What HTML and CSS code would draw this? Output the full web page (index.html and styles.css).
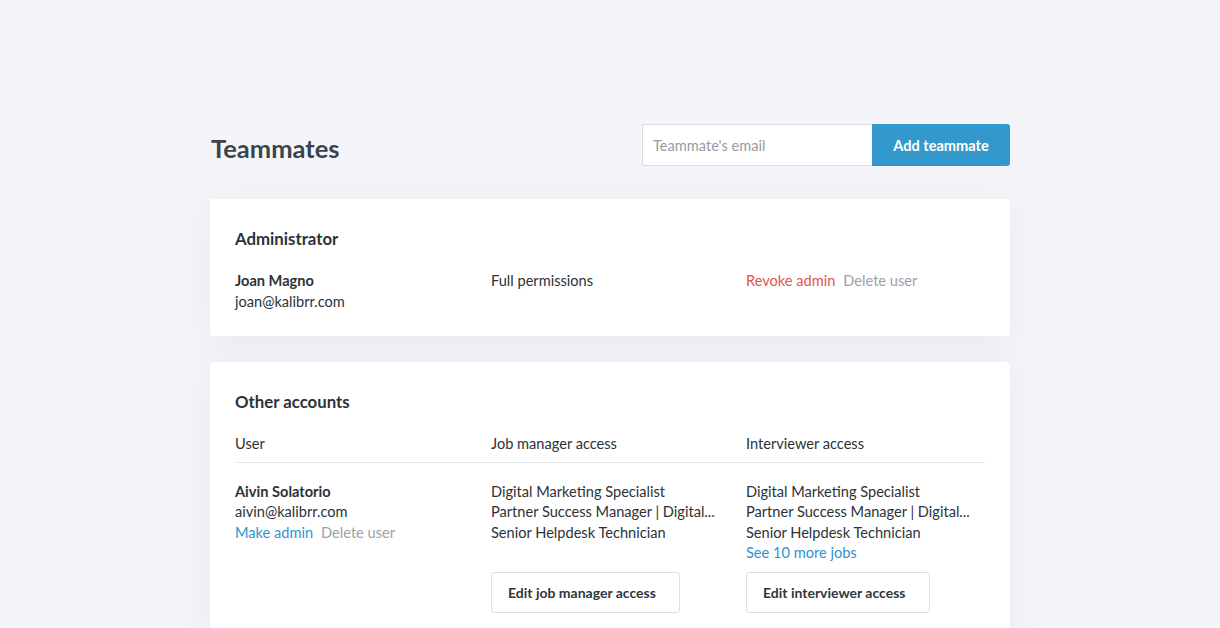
FILE: index.html
```html
<!DOCTYPE html>
<html>
<head>
<meta charset="utf-8">
<link rel="stylesheet" href="styles.css">
</head>
<body>
<div class="page">
  <div class="header">
    <h1 class="title">Teammates</h1>
    <div class="add-form">
      <input class="email-input" type="text" placeholder="Teammate's email">
      <button class="add-btn">Add teammate</button>
    </div>
  </div>

  <div class="card admin-card">
    <h2 class="card-title">Administrator</h2>
    <div class="grid-row admin-row">
      <div class="col">
        <div class="name">Joan Magno</div>
        <div class="email">joan@kalibrr.com</div>
      </div>
      <div class="col">Full permissions</div>
      <div class="col actions">
        <span class="link-red">Revoke admin</span>
        <span class="link-grey">Delete user</span>
      </div>
    </div>
  </div>

  <div class="card other-card">
    <h2 class="card-title">Other accounts</h2>
    <div class="grid-row table-head">
      <div class="col">User</div>
      <div class="col">Job manager access</div>
      <div class="col">Interviewer access</div>
    </div>
    <div class="grid-row user-row">
      <div class="col">
        <div class="name">Aivin Solatorio</div>
        <div class="email">aivin@kalibrr.com</div>
        <div class="actions">
          <span class="link-blue">Make admin</span>
          <span class="link-grey">Delete user</span>
        </div>
      </div>
      <div class="col stack">
        <div class="jobs">
          <div class="job">Digital Marketing Specialist</div>
          <div class="job">Partner Success Manager | Digital...</div>
          <div class="job">Senior Helpdesk Technician</div>
        </div>
        <button class="edit-btn">Edit job manager access</button>
      </div>
      <div class="col stack">
        <div class="jobs">
          <div class="job">Digital Marketing Specialist</div>
          <div class="job">Partner Success Manager | Digital...</div>
          <div class="job">Senior Helpdesk Technician</div>
          <div class="link-blue">See 10 more jobs</div>
        </div>
        <button class="edit-btn">Edit interviewer access</button>
      </div>
    </div>
  </div>
</div>
</body>
</html>
```

FILE: styles.css
```css
* { box-sizing: border-box; }
html, body {
  margin: 0;
  padding: 0;
  background: #f5f5f9;
  font-family: Lato, "Open Sans", sans-serif;
  color: #2c3238;
  font-size: 14.6px;
  line-height: 20.5px;
}
.page {
  width: 800px;
  margin: 0 auto;
  padding-top: 124px;
}
.header {
  display: flex;
  justify-content: space-between;
  align-items: center;
  height: 42px;
}
.title {
  margin: 0 0 0 1px;
  font-size: 25.5px;
  font-weight: 700;
  color: #3b434c;
  line-height: 30px;
  padding-top: 6px;
}
.add-form {
  display: flex;
  height: 42px;
}
.email-input {
  width: 230px;
  height: 42px;
  border: 1px solid #d9dce1;
  border-right: none;
  border-radius: 3px 0 0 3px;
  padding: 0 10px;
  font-family: Lato, sans-serif;
  font-size: 14.6px;
  color: #2c3238;
  background: #fff;
  outline: none;
}
.email-input::placeholder { color: #959ba2; }
.add-btn {
  width: 138px;
  height: 42px;
  border: none;
  border-radius: 0 3px 3px 0;
  background: #3399cc;
  color: #fff;
  font-family: Lato, sans-serif;
  font-size: 14.6px;
  font-weight: 700;
  padding: 0;
}
.card {
  background: #fff;
  border-radius: 3px;
  box-shadow: 0 6px 36px rgba(40, 40, 80, 0.07);
  padding: 30px 25px 24px;
}
.admin-card { margin-top: 33px; }
.other-card { margin-top: 26px; padding-bottom: 30px; }
.card-title {
  margin: 0;
  font-size: 16.8px;
  font-weight: 700;
  line-height: 20px;
  color: #2c3238;
}
.grid-row {
  display: grid;
  grid-template-columns: 256px 255px 1fr;
}
.admin-row { margin-top: 22px; }
.name { font-weight: 700; }
.actions { display: flex; gap: 8px; }
.link-red { color: #e5534b; }
.link-grey { color: #9aa1a8; }
.link-blue { color: #2f93cf; }
.table-head {
  margin-top: 22px;
  padding-bottom: 7px;
  border-bottom: 1px solid #e6e8eb;
}
.user-row { padding-top: 19px; }
.stack {
  display: flex;
  flex-direction: column;
  align-items: flex-start;
}
.edit-btn {
  margin-top: auto;
  height: 41px;
  border: 1px solid #dcdfe3;
  border-radius: 3px;
  background: #fff;
  font-family: Lato, sans-serif;
  font-size: 14px;
  font-weight: 700;
  color: #2f363d;
  padding: 0 23px 0 16px;
}
.jobs { margin-bottom: 8px; }
```
